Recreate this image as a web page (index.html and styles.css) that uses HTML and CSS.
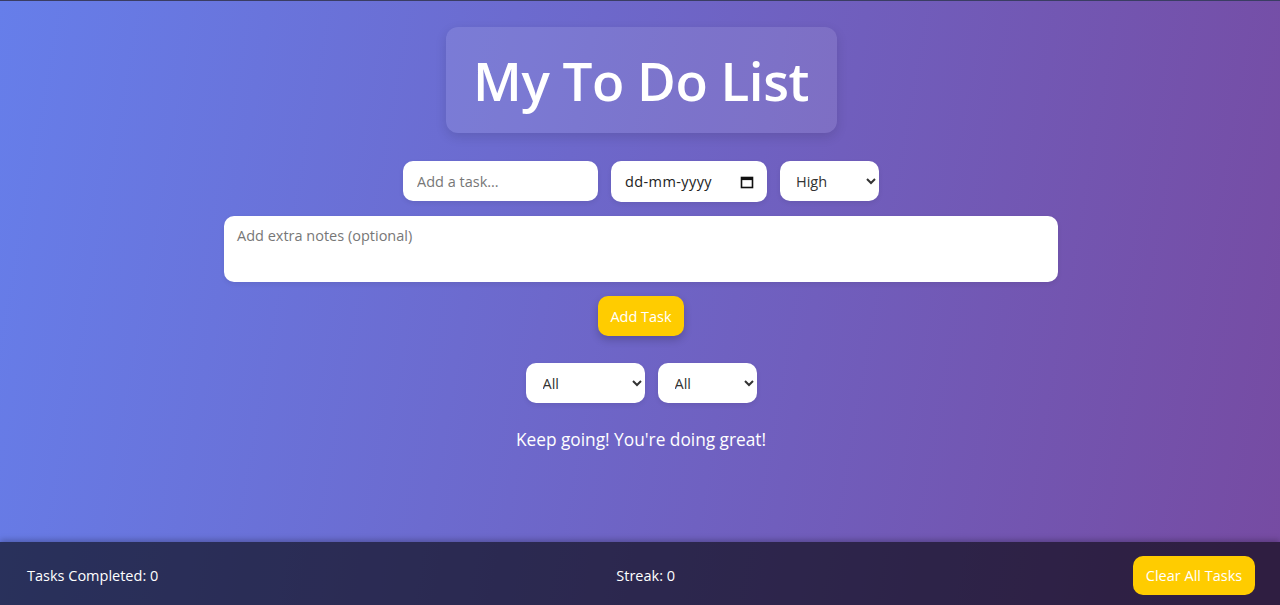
FILE: index.html
```html
<!DOCTYPE html>
<html lang="en">
<head>
<meta charset="utf-8">
<title>My To Do List</title>
<link rel="stylesheet" href="styles.css">
</head>
<body>
<main class="app">
  <header class="title-box">
    <h1 class="title">My To Do List</h1>
  </header>
  <div class="input-row">
    <input class="field task-input" type="text" placeholder="Add a task...">
    <div class="field date-field">
      <span class="date-text">dd-mm-yyyy</span>
      <svg class="cal-icon" width="14" height="14" viewBox="0 0 14 14" aria-hidden="true">
        <rect x="1.5" y="2.5" width="11" height="10" fill="none" stroke="#111" stroke-width="1.6"/>
        <rect x="1.5" y="2.5" width="11" height="2.6" fill="#111"/>
      </svg>
    </div>
    <select class="field priority">
      <option>High</option>
      <option>Medium</option>
      <option>Low</option>
    </select>
  </div>
  <textarea class="field notes" placeholder="Add extra notes (optional)"></textarea>
  <button class="btn add-btn">Add Task</button>
  <div class="filter-row">
    <select class="field filter-status">
      <option>All</option>
      <option>Completed</option>
      <option>Pending</option>
    </select>
    <select class="field filter-priority">
      <option>All</option>
      <option>High</option>
      <option>Medium</option>
      <option>Low</option>
    </select>
  </div>
  <p class="message">Keep going! You're doing great!</p>
</main>
<footer class="footer">
  <span class="stat">Tasks Completed: 0</span>
  <span class="stat">Streak: 0</span>
  <button class="btn clear-btn">Clear All Tasks</button>
</footer>
</body>
</html>
```

FILE: styles.css
```css
* { box-sizing: border-box; }

html, body { height: 100%; }

body {
  margin: 0;
  min-height: 100vh;
  display: flex;
  flex-direction: column;
  font-family: "Open Sans", "Liberation Sans", sans-serif;
  color: #fff;
  background: linear-gradient(100deg, #667eea 0%, #764ba2 100%);
  border-top: 1px solid #3a3d63;
  overflow: hidden;
}

.app {
  flex: 1;
  display: flex;
  flex-direction: column;
  align-items: center;
  padding-top: 26px;
  padding-left: 2px;
}

.title-box {
  width: 391px;
  height: 106px;
  display: flex;
  align-items: center;
  justify-content: center;
  background: rgba(255, 255, 255, 0.1);
  border-radius: 12px;
  box-shadow: 0 4px 12px rgba(0, 0, 0, 0.12);
}

.title {
  margin: 0;
  font-size: 53px;
  font-weight: 600;
  letter-spacing: -0.5px;
  line-height: 1;
}

.input-row {
  display: flex;
  gap: 13px;
  margin-top: 28px;
}

.field {
  border: none;
  outline: none;
  border-radius: 10px;
  background: #fff;
  font-family: inherit;
  font-size: 14.5px;
  color: #333;
  box-shadow: 0 2px 5px rgba(0, 0, 0, 0.08);
}

.field::placeholder { color: #777; }

.task-input {
  width: 195px;
  height: 40px;
  padding: 0 14px;
}

.date-field {
  width: 156px;
  height: 41px;
  display: flex;
  align-items: center;
  justify-content: space-between;
  padding: 0 13px 0 14px;
  font-size: 14.5px;
  color: #222;
}

.date-text { letter-spacing: 0.4px; }

.cal-icon { display: block; }

.priority {
  width: 99px;
  height: 40px;
  padding: 0 10px 0 12px;
}

.notes {
  display: block;
  width: 834px;
  height: 66px;
  margin-top: 14px;
  padding: 10px 13px;
  resize: none;
}

.btn {
  border: none;
  cursor: pointer;
  font-family: inherit;
  font-size: 14.5px;
  color: #fff;
  background: #ffcc00;
  border-radius: 10px;
}

.add-btn {
  margin-top: 14px;
  width: 86px;
  height: 40px;
  box-shadow: 0 4px 8px rgba(0, 0, 0, 0.2);
}

.filter-row {
  display: flex;
  gap: 13px;
  margin-top: 27px;
}

.filter-status {
  width: 119px;
  height: 40px;
  padding: 0 10px 0 13px;
}

.filter-priority {
  width: 99px;
  height: 40px;
  padding: 0 10px 0 13px;
}

.message {
  margin: 26px 0 0;
  font-size: 17.3px;
  line-height: 22px;
}

.footer {
  height: 63px;
  display: flex;
  align-items: center;
  justify-content: space-between;
  padding: 3px 25px 0 27px;
  background: rgba(0, 0, 0, 0.6);
  box-shadow: 0 -2px 6px rgba(0, 0, 0, 0.25);
  font-size: 14.5px;
}

.stat { white-space: nowrap; }

.clear-btn {
  width: 122px;
  height: 39px;
}
```
